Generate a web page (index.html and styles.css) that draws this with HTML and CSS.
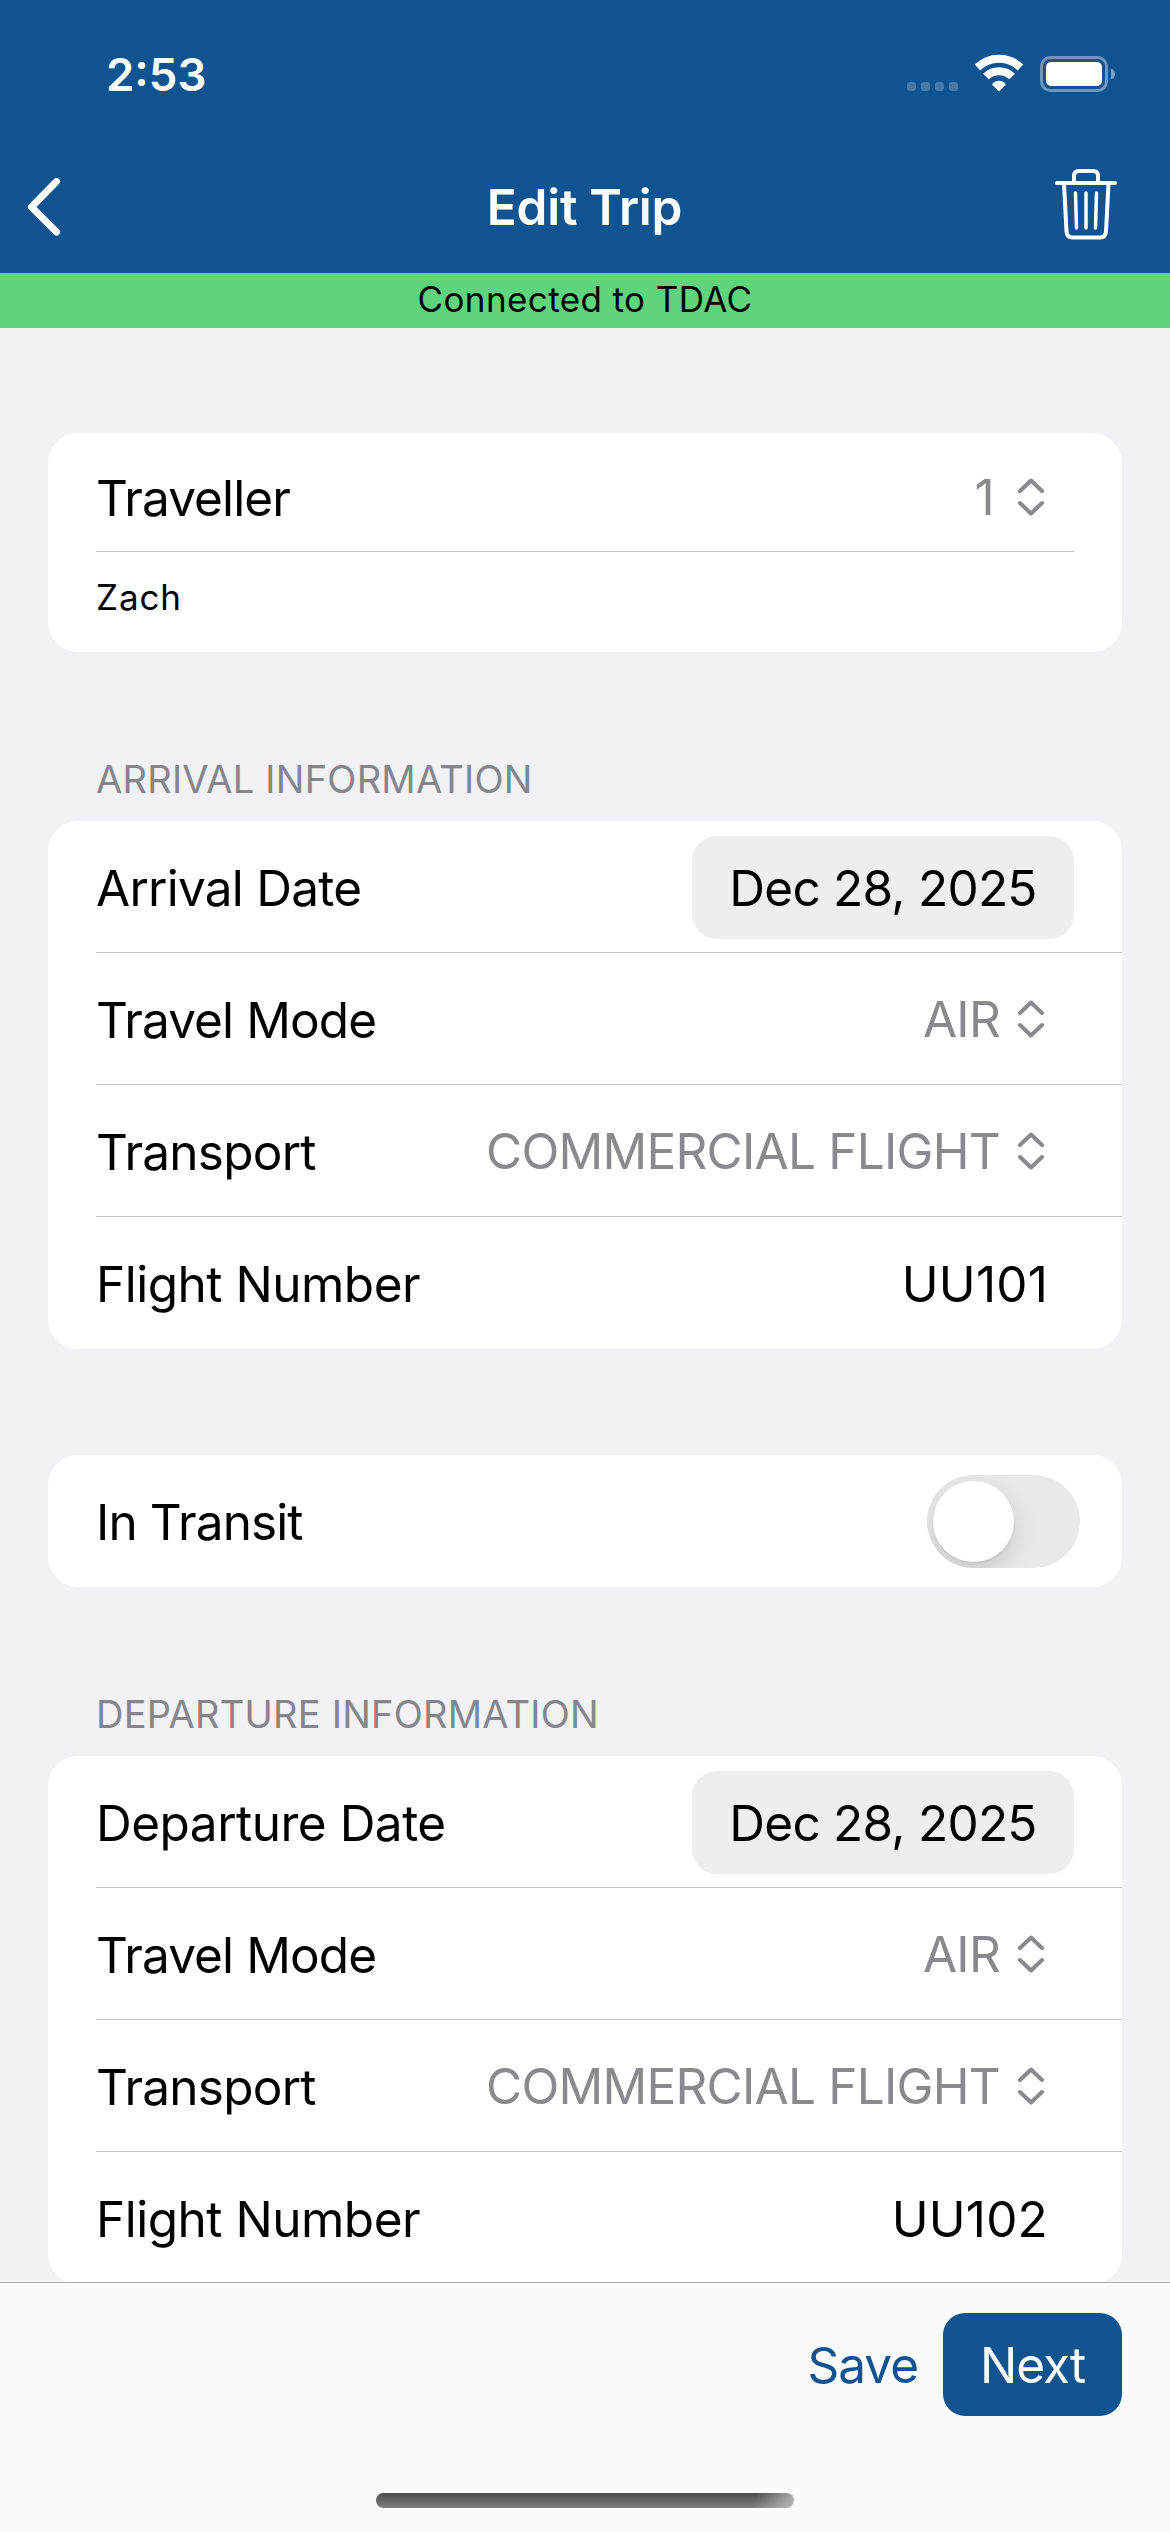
FILE: index.html
```html
<!DOCTYPE html>
<html lang="en">
<head>
<meta charset="utf-8">
<title>Edit Trip</title>
<link rel="stylesheet" href="styles.css">
</head>
<body>
<svg class="defs" aria-hidden="true">
  <symbol id="updown" viewBox="0 0 26 38">
    <path d="M2 13 13 2.5 24 13M2 25 13 35.5 24 25" fill="none" stroke="currentColor" stroke-width="4" stroke-linecap="round" stroke-linejoin="round"/>
  </symbol>
</svg>
<header class="header">
  <div class="status">
    <span class="time">2:53</span>
    <svg class="status-icons" viewBox="0 0 210 44" width="210" height="44">
      <g fill="#fff" fill-opacity=".23">
        <rect x="0" y="31" width="9" height="9" rx="3"/><rect x="14" y="31" width="9" height="9" rx="3"/><rect x="28" y="31" width="9" height="9" rx="3"/><rect x="42" y="31" width="9" height="9" rx="3"/>
      </g>
      <g fill="none" stroke="#fff" stroke-width="8">
        <path d="M70.500 16.500A31 31 0 0 1 113.500 16.500"/>
        <path d="M79 25.500A18.500 18.500 0 0 1 105 25.500"/>
      </g>
      <path fill="#fff" d="M92 40.500 85.500 34Q85 33 86 32A9.500 9.500 0 0 1 98 32Q99 33 98.500 34Z"/>
      <rect x="134.500" y="6.500" width="65" height="33" rx="9" fill="none" stroke="#fff" stroke-opacity=".4" stroke-width="3"/>
      <rect x="139" y="11" width="56" height="24" rx="5" fill="#fff"/>
      <path d="M204 17.500Q208 19 208 23T204 28.500Z" fill="#fff" fill-opacity=".45"/>
    </svg>
  </div>
  <div class="nav">
    <svg class="back" viewBox="0 0 34 58" width="34" height="58"><path d="M29.500 3.500 4.500 29 29.500 54" fill="none" stroke="#fff" stroke-width="7" stroke-linecap="round" stroke-linejoin="round"/></svg>
    <h1 class="title">Edit Trip</h1>
    <svg class="trash" viewBox="0 0 62 72" width="62" height="72" fill="none" stroke="#fff" stroke-width="4" stroke-linecap="round" stroke-linejoin="round">
      <path d="M2 15H60M19 14V8Q19 3 24 3H38Q43 3 43 8V14M9 16 11.500 63.500Q12 69.500 17.500 69.500H45Q50.500 69.500 51 63.500L53.500 16"/>
      <path stroke-width="3.500" d="M20.500 25 21.500 60M31 25V60M41.500 25 40.500 60"/>
    </svg>
  </div>
</header>
<div class="banner"><span class="caption">Connected to TDAC</span></div>
<main class="form">
  <section class="card traveller">
    <div class="row short"><span class="label tight">Traveller</span><span class="picker">1<svg class="updown"><use href="#updown"/></svg></span></div>
    <div class="name"><span class="caption">Zach</span></div>
  </section>
  <h2 class="heading">ARRIVAL INFORMATION</h2>
  <section class="card">
    <div class="row"><span class="label">Arrival Date</span><span class="date">Dec 28, 2025</span></div>
    <div class="row"><span class="label tight">Travel Mode</span><span class="picker">AIR<svg class="updown"><use href="#updown"/></svg></span></div>
    <div class="row"><span class="label">Transport</span><span class="picker">COMMERCIAL FLIGHT<svg class="updown"><use href="#updown"/></svg></span></div>
    <div class="row"><span class="label wide">Flight Number</span><span class="value">UU101</span></div>
  </section>
  <section class="card transit">
    <div class="row"><span class="label tight">In Transit</span><span class="toggle"><span class="knob"></span></span></div>
  </section>
  <h2 class="heading">DEPARTURE INFORMATION</h2>
  <section class="card">
    <div class="row"><span class="label wide">Departure Date</span><span class="date">Dec 28, 2025</span></div>
    <div class="row"><span class="label tight">Travel Mode</span><span class="picker">AIR<svg class="updown"><use href="#updown"/></svg></span></div>
    <div class="row"><span class="label">Transport</span><span class="picker">COMMERCIAL FLIGHT<svg class="updown"><use href="#updown"/></svg></span></div>
    <div class="row"><span class="label wide">Flight Number</span><span class="value">UU102</span></div>
  </section>
</main>
<footer class="toolbar">
  <div class="actions"><span class="save">Save</span><span class="next">Next</span></div>
  <div class="home"></div>
</footer>
</body>
</html>
```
FILE: styles.css
```css
* { box-sizing: border-box; }
body {
  margin: 0;
  width: 1170px;
  height: 2532px;
  overflow: hidden;
  display: flex;
  flex-direction: column;
  background: #f2f1f6;
  color: #000;
  font: 400 49.5px/60px Inter, "Liberation Sans", sans-serif;
  letter-spacing: -0.75px;
  white-space: nowrap;
}
h1, h2 { margin: 0; font: inherit; }
.defs { position: absolute; width: 0; height: 0; }
.header { flex: none; height: 273px; background: #0f5391; color: #fff; }
.status {
  height: 141px;
  padding: 52px 53px 0 106px;
  display: flex;
  justify-content: space-between;
  align-items: flex-start;
}
.time { font-size: 45.5px; font-weight: 600; line-height: 46px; letter-spacing: 0; }
.status-icons { margin-top: -1px; }
.nav {
  height: 132px;
  padding: 0 53px 0 27px;
  display: grid;
  grid-template-columns: 200px 1fr 175px;
  align-items: center;
}
.title { text-align: center; font-weight: 600; letter-spacing: -0.25px; }
.trash { justify-self: end; margin-bottom: 6px; }
.banner {
  flex: none;
  height: 55px;
  padding-bottom: 3px;
  display: flex;
  align-items: center;
  justify-content: center;
  background: #5fd47c;
}
.caption { font-size: 35px; letter-spacing: 0.4px; }
.form { flex: none; height: 1954px; padding: 105px 48px 0; overflow: hidden; }
.card { background: #fff; border-radius: 30px; padding-left: 48px; }
.traveller { height: 219px; padding-right: 48px; }
.row {
  height: 132px;
  padding: 2px 48px 0 0;
  display: flex;
  align-items: center;
  justify-content: space-between;
  border-bottom: 1px solid #c6c6c8;
}
.row:last-child { border-bottom-color: transparent; }
.short { height: 119px; padding: 11px 0 0; }
.label { letter-spacing: -0.75px; }
.tight { letter-spacing: -0.9px; }
.wide { letter-spacing: -0.5px; }
.name { height: 93px; display: flex; align-items: center; padding-bottom: 3px; }
.name .caption { letter-spacing: 0.9px; }
.picker {
  display: flex;
  align-items: center;
  gap: 18px;
  margin: -2px 30px 0 0;
  color: #8a8a8e;
}
.short .picker { gap: 24px; }
.updown { width: 26px; height: 38px; }
.value { margin-right: 26px; letter-spacing: 0.2px; }
.date {
  height: 103px;
  width: 382px;
  border-radius: 25px;
  background: #eeeeef;
  display: flex;
  align-items: center;
  justify-content: center;
}
.heading {
  padding: 104px 48px 19px;
  font-size: 38px;
  line-height: 46px;
  letter-spacing: 0.25px;
  color: #86858b;
}
.transit { margin-top: 106px; }
.toggle {
  width: 153px;
  height: 93px;
  margin-right: -6px;
  padding: 6px;
  border-radius: 47px;
  background: #e9e9ea;
  overflow: hidden;
}
.knob {
  display: block;
  width: 81px;
  height: 81px;
  border-radius: 50%;
  background: #fff;
  box-shadow: 0 9px 24px rgba(0, 0, 0, .15), 0 2px 3px rgba(0, 0, 0, .05);
}
.toolbar {
  flex: none;
  height: 250px;
  border-top: 1px solid #acacb0;
  background: #fbfbfd;
  padding: 30px 48px 0;
}
.actions { display: flex; justify-content: flex-end; align-items: center; gap: 25px; }
.save { color: #0f5391; letter-spacing: -1px; }
.next {
  width: 179px;
  height: 103px;
  border-radius: 22px;
  background: #0f5391;
  color: #fff;
  letter-spacing: -1px;
  display: flex;
  align-items: center;
  justify-content: center;
}
.home {
  width: 418px;
  height: 15px;
  margin: 77px auto 0;
  border-radius: 8px;
  background:
    linear-gradient(110deg, transparent 90%, rgba(190, 190, 190, .9) 100%),
    linear-gradient(#4d4d4d, #7d7d7d);
}
```
